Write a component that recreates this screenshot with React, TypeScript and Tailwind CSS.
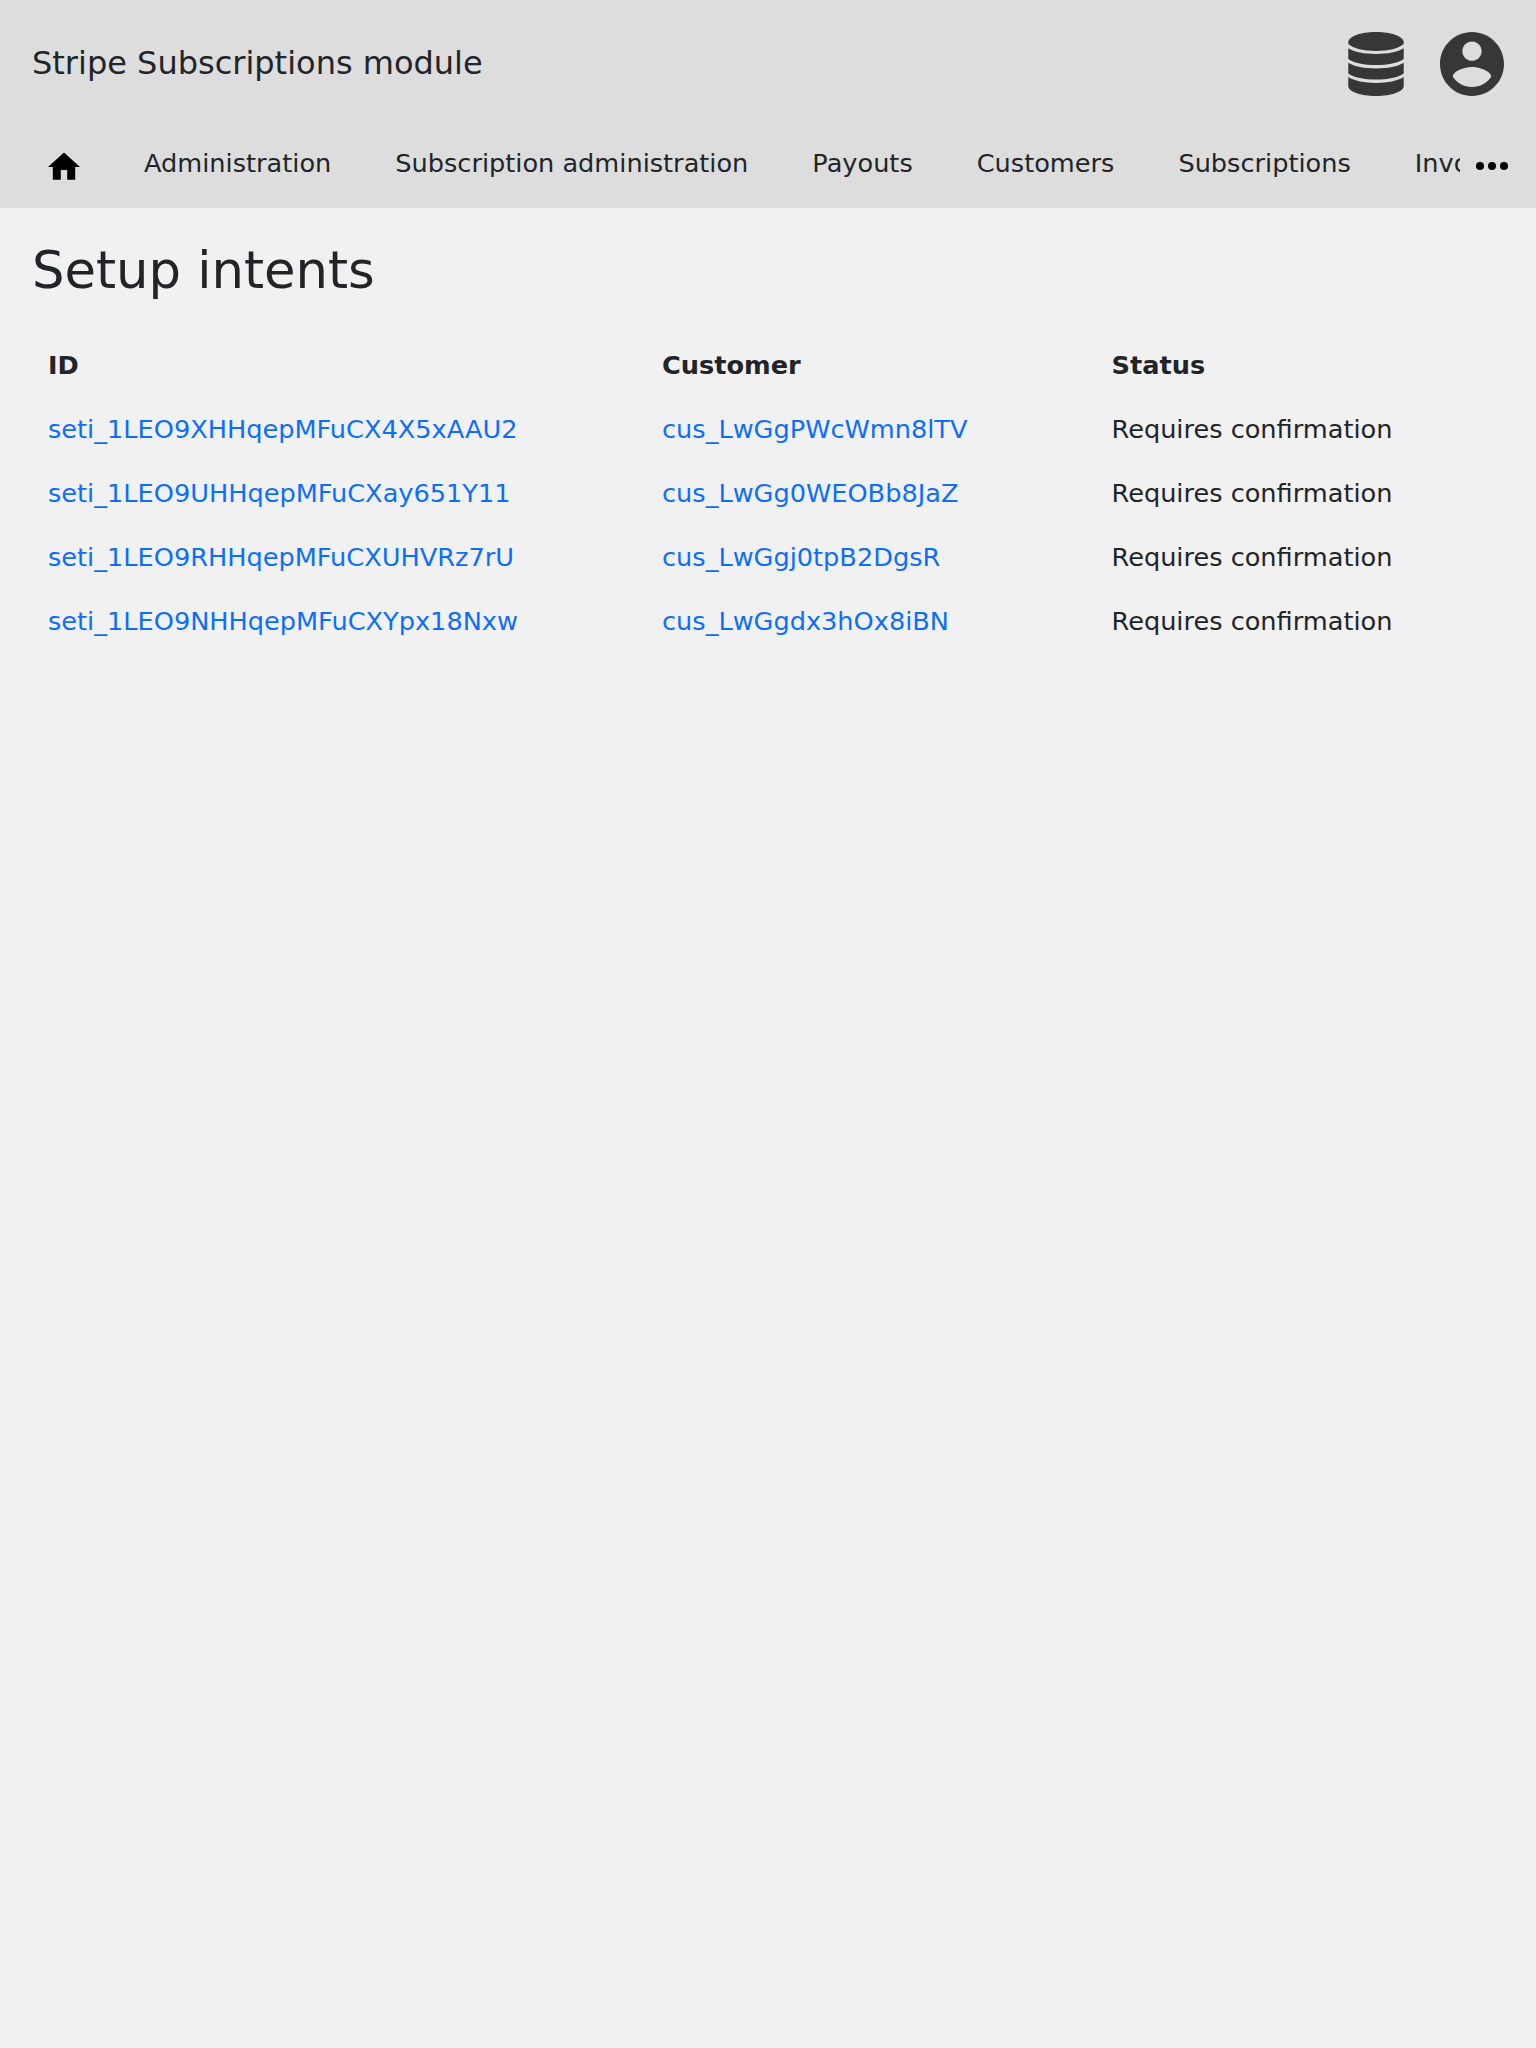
import React from "react";

const navItems = [
  "Administration",
  "Subscription administration",
  "Payouts",
  "Customers",
  "Subscriptions",
  "Invoices",
];

const intents = [
  { id: "seti_1LEO9XHHqepMFuCX4X5xAAU2", customer: "cus_LwGgPWcWmn8lTV" },
  { id: "seti_1LEO9UHHqepMFuCXay651Y11", customer: "cus_LwGg0WEOBb8JaZ" },
  { id: "seti_1LEO9RHHqepMFuCXUHVRz7rU", customer: "cus_LwGgj0tpB2DgsR" },
  { id: "seti_1LEO9NHHqepMFuCXYpx18Nxw", customer: "cus_LwGgdx3hOx8iBN" },
];

function DatabaseIcon() {
  return (
    <svg className="h-16 w-14" viewBox="-0.3 0 56.6 64" preserveAspectRatio="none" fill="#373737" aria-hidden="true">
      <path d="M0 10.500C0 4.500 12 0 28 0S56 4.500 56 10.500V12C51 16.500 40 18.900 28 18.900S5 16.500 0 12Z" />
      <path d="M0 16.200C6 20 16 21.900 28 21.900S50 20 56 16.200V27C50 31 40 33 28 33S6 31 0 27Z" />
      <path d="M0 30.700C6 34.500 16 36.400 28 36.400S50 34.500 56 30.700V41.500C50 45.500 40 47.500 28 47.500S6 45.500 0 41.500Z" />
      <path d="M0 45C6 49 16 50.900 28 50.900S50 49 56 45V54C56 59.500 44 64 28 64S0 59.500 0 54Z" />
    </svg>
  );
}

function AccountIcon() {
  return (
    <svg className="size-16" viewBox="2 2 20 20" fill="#373737" aria-hidden="true">
      <path d="M12 2C6.480 2 2 6.480 2 12s4.480 10 10 10 10-4.480 10-10S17.520 2 12 2zm0 3c1.660 0 3 1.340 3 3s-1.340 3-3 3-3-1.340-3-3 1.340-3 3-3zm0 14.200c-2.500 0-4.710-1.280-6-3.220.03-1.990 4-3.080 6-3.080 1.990 0 5.970 1.090 6 3.080-1.290 1.940-3.500 3.220-6 3.220z" />
    </svg>
  );
}

export default function App() {
  return (
    <div className="min-h-[2048px] w-full bg-[#f1f1f1] font-['DejaVu_Sans',sans-serif] text-[25.6px] leading-8 text-[#212529]">
      <header className="h-52 bg-[#dddddd]">
        <div className="flex h-32 items-center justify-between px-8">
          <div className="pb-0.5 text-[32px] leading-10">Stripe Subscriptions module</div>
          <div className="flex items-center gap-9">
            <DatabaseIcon />
            <AccountIcon />
          </div>
        </div>
        <nav className="flex h-20 items-start">
          <div className="flex h-20 w-[1460px] shrink-0 items-start overflow-hidden whitespace-nowrap">
            <a className="ml-12 mr-8 mt-6 block shrink-0">
              <svg className="h-7 w-8" viewBox="2 2.700 20 17.500" fill="#000" aria-hidden="true">
                <path d="M10 20v-6h4v6h5v-8h3L12 3 2 12h3v8z" />
              </svg>
            </a>
            {navItems.map((item) => (
              <a key={item} className="mt-[19px] shrink-0 px-8">
                {item}
              </a>
            ))}
          </div>
          <svg className="ml-2 mt-[14px] size-12 shrink-0" viewBox="0 0 24 24" fill="#000" aria-hidden="true">
            <path d="M6 10a2 2 0 1 0 0 4 2 2 0 0 0 0-4zm12 0a2 2 0 1 0 0 4 2 2 0 0 0 0-4zm-6 0a2 2 0 1 0 0 4 2 2 0 0 0 0-4z" />
          </svg>
        </nav>
      </header>
      <main className="px-8 pt-8">
        <h1 className="text-[51.2px] leading-[61px]">Setup intents</h1>
        <table className="mt-8 w-full table-fixed border-collapse text-left">
          <colgroup>
            <col className="w-[614px]" />
            <col className="w-[449.5px]" />
            <col />
          </colgroup>
          <thead>
            <tr className="h-16">
              <th className="px-4 font-bold">ID</th>
              <th className="px-4 font-bold">Customer</th>
              <th className="px-4 font-bold">Status</th>
            </tr>
          </thead>
          <tbody>
            {intents.map((intent) => (
              <tr key={intent.id} className="h-16">
                <td className="px-4 text-[#0d6efd]">{intent.id}</td>
                <td className="px-4 text-[#0d6efd]">{intent.customer}</td>
                <td className="px-4">Requires confirmation</td>
              </tr>
            ))}
          </tbody>
        </table>
      </main>
    </div>
  );
}
